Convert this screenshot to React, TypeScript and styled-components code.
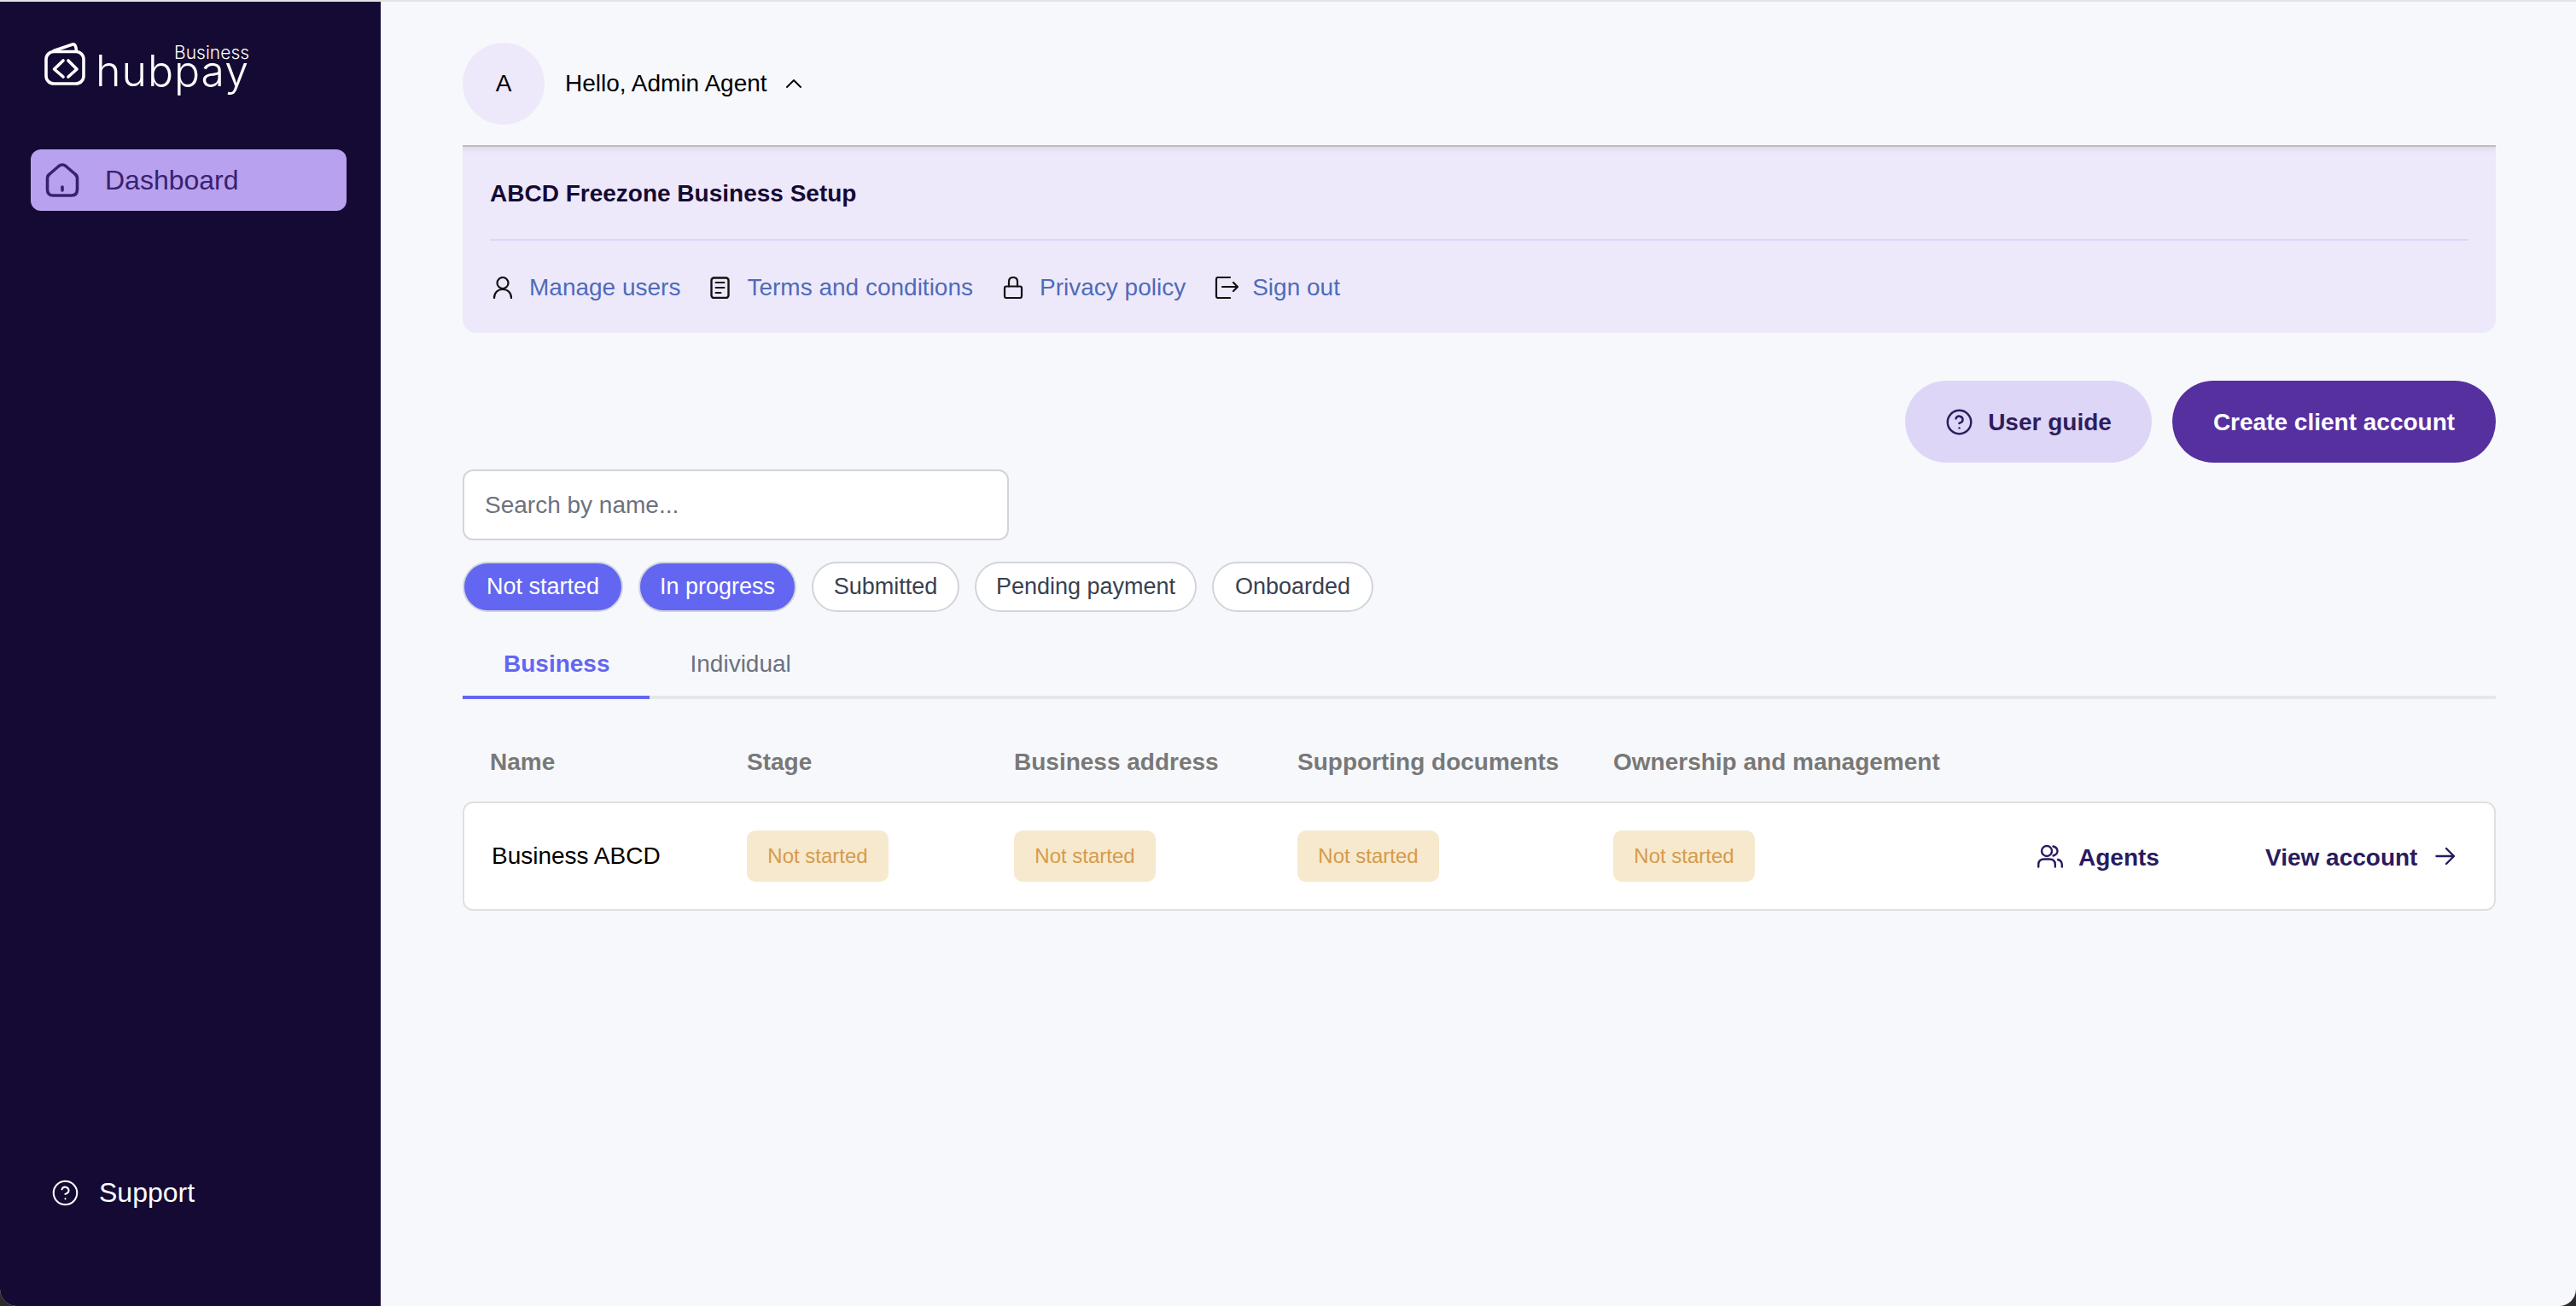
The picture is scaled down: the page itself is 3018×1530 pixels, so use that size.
import React from "react";
import styled, { createGlobalStyle } from "styled-components";
import { ChevronUp, CircleHelp } from "lucide-react";

const GlobalStyle = createGlobalStyle`
    html, body {
        margin: 0;
        background: #2b2b2b;
    }
    * {
        box-sizing: border-box;
    }
    body {
        font-family: "Liberation Sans", Arial, sans-serif;
    }
`;

const Shell = styled.div`
    display: flex;
    width: 100vw;
    height: 100vh;
    overflow: hidden;
    border-top: 2px solid #e4e4e4;
    border-radius: 0 0 20px 20px;
    background: #f7f8fc;
`;

const Sidebar = styled.aside`
    width: 446px;
    flex-shrink: 0;
    display: flex;
    flex-direction: column;
    background: #150a33;
    padding: 48px 40px 114px 36px;
`;

const Logo = styled.div`
    display: flex;
    align-items: flex-start;
    gap: 12px;
    padding-left: 16px;
    height: 68px;
    color: #fff;
`;

const LogoWords = styled.div`
    position: relative;
    font-family: "Inter", sans-serif;
    font-weight: 300;
    font-size: 50px;
    line-height: 58px;
    margin-top: 4px;
    letter-spacing: 1px;
`;

const LogoTag = styled.span`
    position: absolute;
    right: 0;
    top: -4px;
    font-size: 21px;
    line-height: 24px;
    letter-spacing: 0;
`;

const NavItem = styled.div`
    display: flex;
    align-items: center;
    gap: 30px;
    height: 72px;
    margin-top: 57px;
    padding-left: 17px;
    border-radius: 12px;
    background: #b8a1ef;
    color: #38226e;
    font-size: 32px;
`;

const Support = styled.div`
    display: flex;
    align-items: center;
    gap: 23px;
    margin-top: auto;
    padding-left: 24px;
    color: #fff;
    font-size: 32px;
`;

const Main = styled.main`
    flex: 1;
    min-width: 0;
    padding: 48px 94px 0 96px;
`;

const UserRow = styled.div`
    display: flex;
    align-items: center;
    height: 96px;
    margin-bottom: 24px;
    color: #000;
    font-size: 28px;
`;

const Avatar = styled.div`
    width: 96px;
    height: 96px;
    border-radius: 50%;
    background: #ede9fb;
    display: flex;
    align-items: center;
    justify-content: center;
    margin-right: 24px;
`;

const Greeting = styled.span`
    margin-right: 15px;
`;

const Panel = styled.section`
    height: 220px;
    padding: 38px 32px 0;
    border-top: 2px solid #bdbdbd;
    border-radius: 0 0 16px 16px;
    background: #ede9fb;
    box-shadow: inset 0 10px 10px -10px rgba(0, 0, 0, 0.12);
`;

const PanelTitle = styled.h2`
    margin: 0;
    height: 34px;
    font-size: 28px;
    line-height: 34px;
    font-weight: 700;
    color: #150a33;
`;

const PanelDivider = styled.hr`
    margin: 36px 0 0;
    border: 0;
    height: 2px;
    background: #ddd8f7;
`;

const PanelLinks = styled.div`
    display: flex;
    align-items: center;
    gap: 34px;
    margin-top: 38px;
    padding-left: 2px;
`;

const PanelLink = styled.a`
    display: flex;
    align-items: center;
    gap: 18px;
    font-size: 28px;
    line-height: 34px;
    color: #4f6bb8;
`;

const Actions = styled.div`
    display: flex;
    justify-content: flex-end;
    gap: 24px;
    margin-top: 56px;
`;

const PillButton = styled.button<{ $primary?: boolean }>`
    display: flex;
    align-items: center;
    justify-content: center;
    gap: 17px;
    height: 96px;
    width: ${(p) => (p.$primary ? "379px" : "289px")};
    padding: 2px 0 0;
    border: 0;
    border-radius: 48px;
    font-family: inherit;
    font-size: 28px;
    font-weight: 700;
    background: ${(p) => (p.$primary ? "#56309f" : "#ddd6f7")};
    color: ${(p) => (p.$primary ? "#fff" : "#2f1d5c")};
    svg {
        margin-top: -2px;
    }
`;

const Search = styled.input`
    display: block;
    width: 640px;
    height: 83px;
    margin-top: 8px;
    padding: 0 24px;
    border: 2px solid #d1d5db;
    border-radius: 12px;
    background: #fff;
    font-family: inherit;
    font-size: 28px;
    &::placeholder {
        color: #6b7280;
        opacity: 1;
    }
`;

const Chips = styled.div`
    display: flex;
    gap: 18px;
    margin-top: 25px;
`;

const Chip = styled.span<{ $active?: boolean; $width: number }>`
    display: flex;
    align-items: center;
    justify-content: center;
    height: 59px;
    width: ${(p) => p.$width}px;
    border: 2px solid #d1d5db;
    border-radius: 30px;
    font-size: 27px;
    background: ${(p) => (p.$active ? "#6366f1" : "#fff")};
    color: ${(p) => (p.$active ? "#fff" : "#374151")};
`;

const Tabs = styled.div`
    display: flex;
    height: 78px;
    margin-top: 24px;
    border-bottom: 4px solid #e5e7eb;
`;

const Tab = styled.div<{ $active?: boolean }>`
    display: flex;
    align-items: center;
    height: 78px;
    padding: ${(p) => (p.$active ? "0 46px 0 48px" : "0 48px")};
    font-size: 28px;
    font-weight: ${(p) => (p.$active ? 700 : 400)};
    color: ${(p) => (p.$active ? "#6366f1" : "#6b7280")};
    border-bottom: 4px solid ${(p) => (p.$active ? "#6366f1" : "transparent")};
`;

const HeadRow = styled.div`
    display: grid;
    grid-template-columns: 301px 313px 332px 370px 497px;
    align-items: center;
    height: 120px;
    padding: 28px 32px 0;
    font-size: 28px;
    font-weight: 700;
    color: #787878;
`;

const DataRow = styled.div`
    display: grid;
    grid-template-columns: 299px 313px 332px 370px 497px 267px auto;
    align-items: center;
    height: 128px;
    padding: 0 32px;
    border: 2px solid #e0e0e0;
    border-radius: 12px;
    background: #fff;
    font-size: 28px;
    color: #000;
`;

const Badge = styled.span`
    display: inline-flex;
    align-items: center;
    justify-content: center;
    width: 166px;
    height: 60px;
    border-radius: 10px;
    background: #f6e9cd;
    color: #d69a4c;
    font-size: 24px;
`;

const RowAction = styled.span<{ $gap: number }>`
    display: flex;
    align-items: center;
    gap: ${(p) => p.$gap}px;
    padding-top: 4px;
    font-weight: 700;
    color: #2a1a5e;
    svg {
        margin-top: -4px;
    }
`;

const SignOutSvg = styled.svg`
    margin-right: -2px;
`;

const WalletIcon = () => (
    <svg width="48" height="50" viewBox="0 0 48 50" fill="none" stroke="#fff" strokeWidth="3.6" strokeLinecap="round" strokeLinejoin="round">
        <rect x="2" y="10.5" width="44" height="37.5" rx="9" />
        <path d="M11 9.5 L33 2 Q37 1 37.5 9.5" />
        <path d="M22 21 L11.5 31 L22 40" />
        <path d="M28 21 L38 31 L28 40" />
    </svg>
);

const HomeIcon = () => (
    <svg width="40" height="40" viewBox="0 0 40 40" fill="none" stroke="#38226e" strokeWidth="3.6" strokeLinecap="round" strokeLinejoin="round">
        <path d="M2.5 18 Q2.5 15 5 13 L16 3.5 Q20 0.5 24 3.5 L35 13 Q37.5 15 37.5 18 V31 Q37.5 38 30.5 38 H9.5 Q2.5 38 2.5 31 Z" />
        <path d="M20 28 V32" />
    </svg>
);

const PersonIcon = () => (
    <svg width="26" height="26" viewBox="0 0 26 26" fill="none" stroke="#111" strokeWidth="2.2" strokeLinecap="round">
        <circle cx="13" cy="7.5" r="6.5" />
        <path d="M3 25 C3 19 7 15 13 15 C19 15 23 19 23 25" />
    </svg>
);

const DocIcon = () => (
    <svg width="26" height="26" viewBox="0 0 26 26" fill="none" stroke="#111" strokeWidth="2.4" strokeLinecap="round">
        <rect x="2.5" y="1.5" width="20" height="23.5" rx="3" />
        <path d="M7.5 7 H17.5 M7.5 13 H17.5 M7.5 19 H13.5" strokeWidth="2" />
    </svg>
);

const LockIcon = () => (
    <svg width="26" height="26" viewBox="0 0 26 26" fill="none" stroke="#111" strokeWidth="2.2" strokeLinecap="round">
        <rect x="3" y="11.5" width="20" height="13.5" rx="2" />
        <path d="M8 11.5 V6 Q8 1 13 1 Q18 1 18 6 V11.5" />
    </svg>
);

const SignOutIcon = () => (
    <SignOutSvg width="28" height="26" viewBox="0 0 28 26" fill="none" stroke="#111" strokeWidth="2.2" strokeLinecap="round" strokeLinejoin="round">
        <path d="M18 1 H4 Q2 1 2 3 V23 Q2 25 4 25 H18" />
        <path d="M9 12 H27 M22 7 L27 12 L22 17" />
    </SignOutSvg>
);

const AgentsIcon = () => (
    <svg width="30" height="27" viewBox="0 0 30 27" fill="none" stroke="#2a1a5e" strokeWidth="2.4" strokeLinecap="round">
        <circle cx="11" cy="7" r="6" />
        <path d="M1.2 25.5 V23 Q1.2 16.5 8 16.5 H14 Q20.8 16.5 20.8 23 V25.5" />
        <path d="M18.5 1.5 Q23.5 3 23.5 7 Q23.5 11 18.5 12.5" />
        <path d="M24 17 Q28.8 18.5 28.8 23 V25.5" />
    </svg>
);

const ArrowIcon = () => (
    <svg width="24" height="22" viewBox="0 0 24 22" fill="none" stroke="#2a1a5e" strokeWidth="2.4" strokeLinecap="round" strokeLinejoin="round">
        <path d="M1.5 11 H22 M13 2 L22 11 L13 20" />
    </svg>
);

const statuses = ["Stage", "Business address", "Supporting documents", "Ownership and management"];

const App = (): JSX.Element => {
    return (
        <React.Fragment>
            <GlobalStyle />
            <Shell>
                <Sidebar>
                    <Logo>
                        <WalletIcon />
                        <LogoWords>
                            hubpay
                            <LogoTag>Business</LogoTag>
                        </LogoWords>
                    </Logo>
                    <NavItem>
                        <HomeIcon />
                        Dashboard
                    </NavItem>
                    <Support>
                        <CircleHelp size={33} strokeWidth={1.5} />
                        Support
                    </Support>
                </Sidebar>
                <Main>
                    <UserRow>
                        <Avatar>A</Avatar>
                        <Greeting>Hello, Admin Agent</Greeting>
                        <ChevronUp size={32} strokeWidth={1.4} />
                    </UserRow>
                    <Panel>
                        <PanelTitle>ABCD Freezone Business Setup</PanelTitle>
                        <PanelDivider />
                        <PanelLinks>
                            <PanelLink>
                                <PersonIcon />
                                Manage users
                            </PanelLink>
                            <PanelLink>
                                <DocIcon />
                                Terms and conditions
                            </PanelLink>
                            <PanelLink>
                                <LockIcon />
                                Privacy policy
                            </PanelLink>
                            <PanelLink>
                                <SignOutIcon />
                                Sign out
                            </PanelLink>
                        </PanelLinks>
                    </Panel>
                    <Actions>
                        <PillButton>
                            <CircleHelp size={33} strokeWidth={1.8} />
                            User guide
                        </PillButton>
                        <PillButton $primary>Create client account</PillButton>
                    </Actions>
                    <Search placeholder="Search by name..." />
                    <Chips>
                        <Chip $active $width={188}>Not started</Chip>
                        <Chip $active $width={185}>In progress</Chip>
                        <Chip $width={173}>Submitted</Chip>
                        <Chip $width={260}>Pending payment</Chip>
                        <Chip $width={189}>Onboarded</Chip>
                    </Chips>
                    <Tabs>
                        <Tab $active>Business</Tab>
                        <Tab>Individual</Tab>
                    </Tabs>
                    <HeadRow>
                        <span>Name</span>
                        {statuses.map((s) => (
                            <span key={s}>{s}</span>
                        ))}
                    </HeadRow>
                    <DataRow>
                        <span>Business ABCD</span>
                        {statuses.map((s) => (
                            <span key={s}>
                                <Badge>Not started</Badge>
                            </span>
                        ))}
                        <RowAction $gap={18}>
                            <AgentsIcon />
                            Agents
                        </RowAction>
                        <RowAction $gap={21}>
                            View account
                            <ArrowIcon />
                        </RowAction>
                    </DataRow>
                </Main>
            </Shell>
        </React.Fragment>
    );
};

export default App;
